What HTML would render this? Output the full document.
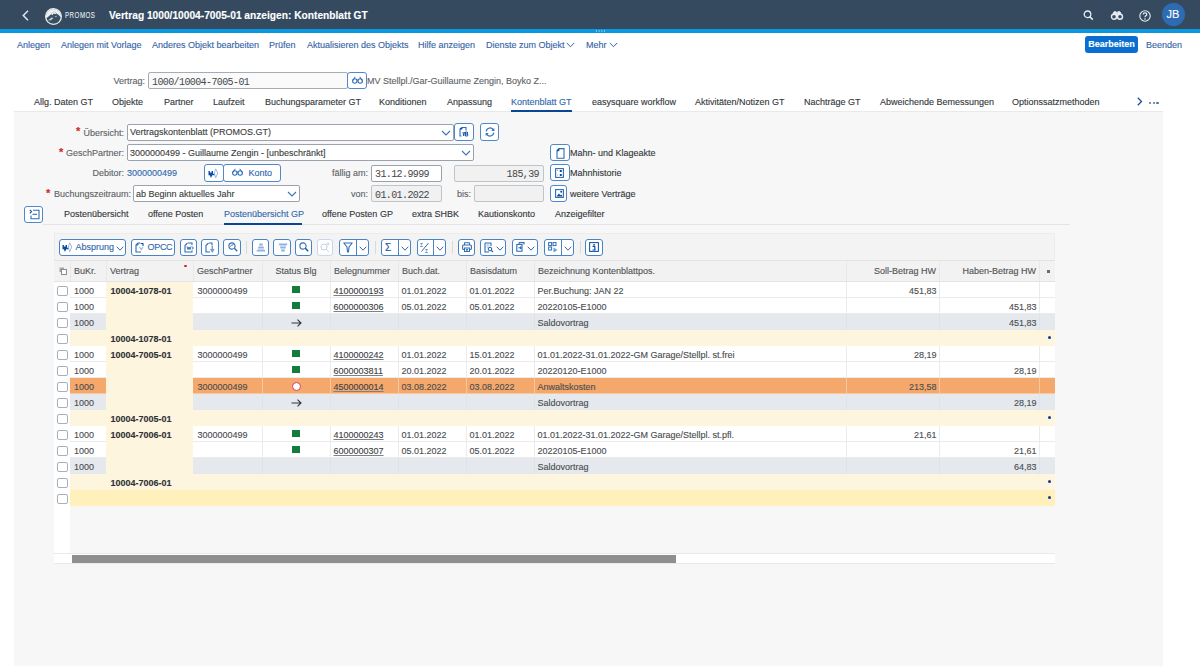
<!DOCTYPE html><html><head><meta charset="utf-8"><style>
*{box-sizing:border-box;margin:0;padding:0}
body{width:1200px;height:672px;overflow:hidden;background:#fff;position:relative;font-family:"Liberation Sans",sans-serif;font-size:9px;color:#32363a;-webkit-text-stroke:0.12px}
.ab{position:absolute;white-space:nowrap}
.t{position:absolute;white-space:nowrap;line-height:11px}
.tb{color:#3463a6;top:40px}
.lbl{color:#5e6266;text-align:right}
.inp{position:absolute;background:#fff;border:1px solid #9aa3ad;border-radius:2px}
.inp.dis{background:#f1f1f1;border-color:#bfc4c9}
.mono{font-family:"Liberation Mono",monospace;-webkit-text-stroke:0;font-size:10px;letter-spacing:-0.6px}
.btn{position:absolute;border:1px solid #5088c9;border-radius:3px;background:#fff}
.tab{top:97px;color:#32363a}
.panel{position:absolute;left:14px;top:111px;width:1149px;height:555px;background:#f7f7f7}
svg{position:absolute;overflow:visible}
</style></head><body>
<div class="ab" style="left:0;top:0;width:1200px;height:29px;background:#354a5f"></div>
<div class="ab" style="left:0;top:29px;width:1200px;height:4px;background:#0899e0"></div>
<div class="ab" style="left:595px;top:30px;width:11px;height:2px;background:radial-gradient(circle,#7fd0f5 0.6px,transparent 0.9px) 0 0/2.75px 2px"></div>
<svg style="left:22px;top:10px" width="8" height="11" viewBox="0 0 8 11"><path d="M6 0.8 L1.3 5.5 L6 10.2" stroke="#dde7f2" stroke-width="1.5" fill="none"/></svg>
<svg style="left:45px;top:7.5px" width="17" height="17" viewBox="0 0 17 17">
<circle cx="8.5" cy="8.5" r="7.6" fill="#eef1f4"/>
<path d="M1.17 10.5 L3.5 8.6 L6 6.3 L9.3 3.6 L11.5 5.6 L13.5 6.8 L16.03 9.5 A7.6 7.6 0 0 1 1.17 10.5Z" fill="#3b4f63"/>
<path d="M6 6.3 L9.3 3.6 L11.5 5.6 L10 6.2 L8.6 5.6 L7.6 7.2 Z" fill="#e9edf1"/>
<path d="M3 12.5 L6.5 9.5 L8.5 10 L6 12.2 Z" fill="#c4ced8"/>
<path d="M9.5 8.5 L12.5 7.5 L11 9.3Z" fill="#aeb9c4"/>
<circle cx="8.5" cy="8.5" r="7.9" fill="none" stroke="#e8ecf0" stroke-width="1.2"/>
</svg>
<div class="t" style="left:65px;top:10.2px;color:#e2e8ee;font-size:9.3px;transform:scaleX(0.66);transform-origin:0 0;letter-spacing:0.8px">PROMOS</div>
<div class="t" style="left:109px;top:10px;color:#fff;font-weight:bold;font-size:10.2px;line-height:12px">Vertrag 1000/10004-7005-01 anzeigen: Kontenblatt GT</div>
<svg style="left:1083px;top:10px" width="11" height="11" viewBox="0 0 11 11"><circle cx="4.5" cy="4.3" r="3.3" stroke="#e6ecf2" stroke-width="1.3" fill="none"/><path d="M6.9 6.7 L9.8 9.6" stroke="#e6ecf2" stroke-width="1.6"/></svg>
<svg style="left:1111px;top:11px" width="12" height="9" viewBox="0 0 12 9"><path d="M1.5 4 L3 0.8 L5.2 0.8 L5.6 4 M10.5 4 L9 0.8 L6.8 0.8 L6.4 4" fill="#e6ecf2" stroke="#e6ecf2" stroke-width="1"/><circle cx="3" cy="5.8" r="2.5" fill="#354a5f" stroke="#e6ecf2" stroke-width="1.4"/><circle cx="9" cy="5.8" r="2.5" fill="#354a5f" stroke="#e6ecf2" stroke-width="1.4"/></svg>
<svg style="left:1139px;top:10px" width="12" height="12" viewBox="0 0 12 12"><circle cx="6" cy="6" r="5.2" stroke="#e6ecf2" stroke-width="1.1" fill="none"/><path d="M4.2 4.6 Q4.2 2.8 6 2.8 Q7.8 2.8 7.8 4.4 Q7.8 5.4 6.6 5.9 Q6 6.2 6 7.3" stroke="#e6ecf2" stroke-width="1.2" fill="none"/><circle cx="6" cy="9" r="0.8" fill="#e6ecf2"/></svg>
<div class="ab" style="left:1161.5px;top:3.2px;width:23px;height:23px;border-radius:50%;background:#2d6cb2;color:#fff;font-size:11px;line-height:23px;text-align:center">JB</div>
<div class="t tb" style="left:17px">Anlegen</div>
<div class="t tb" style="left:61px">Anlegen mit Vorlage</div>
<div class="t tb" style="left:152px">Anderes Objekt bearbeiten</div>
<div class="t tb" style="left:269px">Prüfen</div>
<div class="t tb" style="left:307px">Aktualisieren des Objekts</div>
<div class="t tb" style="left:418px">Hilfe anzeigen</div>
<div class="t tb" style="left:486px">Dienste zum Objekt</div>
<div class="t tb" style="left:586px">Mehr</div>
<svg style="left:566px;top:42px" width="9" height="6" viewBox="0 0 9 6"><path d="M0.8 1 L4.5 4.7 L8.2 1" stroke="#2c62a8" stroke-width="1" fill="none"/></svg>
<svg style="left:609px;top:42px" width="9" height="6" viewBox="0 0 9 6"><path d="M0.8 1 L4.5 4.7 L8.2 1" stroke="#2c62a8" stroke-width="1" fill="none"/></svg>
<div class="ab" style="left:1085px;top:36px;width:53px;height:17px;background:#0a6ed1;border-radius:3px;color:#fff;font-weight:bold;line-height:17px;text-align:center">Bearbeiten</div>
<div class="t tb" style="left:1146px">Beenden</div>
<div class="t lbl" style="right:1055px;top:76px">Vertrag:</div>
<div class="inp" style="left:148px;top:72px;width:200px;height:17px;background:#fafafa;border-color:#a4acb5"></div>
<div class="t mono" style="left:152px;top:76.5px;color:#45484b">1000/10004-7005-01</div>
<div class="btn" style="left:347px;top:72px;width:20px;height:17px"></div>
<svg style="left:352px;top:76px" width="11" height="8" viewBox="0 0 11 8"><circle cx="2.8" cy="5" r="2.2" stroke="#2f6db5" stroke-width="1.1" fill="none"/><circle cx="8.2" cy="5" r="2.2" stroke="#2f6db5" stroke-width="1.1" fill="none"/><path d="M1 4.5 L3.2 0.8 M10 4.5 L7.8 0.8 M5 4.6 Q5.5 3.8 6 4.6" stroke="#2f6db5" stroke-width="1" fill="none"/></svg>
<div class="t" style="left:367px;top:76px;color:#5e6266">MV Stellpl./Gar-Guillaume Zengin, Boyko Z...</div>
<div class="t tab" style="left:34px;color:#32363a">Allg. Daten GT</div>
<div class="t tab" style="left:112px;color:#32363a">Objekte</div>
<div class="t tab" style="left:164px;color:#32363a">Partner</div>
<div class="t tab" style="left:213px;color:#32363a">Laufzeit</div>
<div class="t tab" style="left:265px;color:#32363a">Buchungsparameter GT</div>
<div class="t tab" style="left:379px;color:#32363a">Konditionen</div>
<div class="t tab" style="left:447px;color:#32363a">Anpassung</div>
<div class="t tab" style="left:511px;color:#2f67ad">Kontenblatt GT</div>
<div class="t tab" style="left:592px;color:#32363a">easysquare workflow</div>
<div class="t tab" style="left:695px;color:#32363a">Aktivitäten/Notizen GT</div>
<div class="t tab" style="left:804px;color:#32363a">Nachträge GT</div>
<div class="t tab" style="left:880px;color:#32363a">Abweichende Bemessungen</div>
<div class="t tab" style="left:1012px;color:#32363a">Optionssatzmethoden</div>
<svg style="left:1136.5px;top:96.5px" width="6" height="10" viewBox="0 0 6 10"><path d="M0.8 0.8 L4.5 4.5 L0.8 8.3" stroke="#1c4c9a" stroke-width="1.3" fill="none"/></svg>
<div class="ab" style="left:1149.0px;top:102px;width:2.4px;height:2.4px;border-radius:1.2px;background:#566e98"></div>
<div class="ab" style="left:1152.6px;top:102px;width:2.4px;height:2.4px;border-radius:1.2px;background:#566e98"></div>
<div class="ab" style="left:1156.2px;top:102px;width:2.4px;height:2.4px;border-radius:1.2px;background:#566e98"></div>
<div class="panel"></div>
<div class="ab" style="left:14px;top:111px;width:1149px;height:1px;background:#e9e9e9"></div>
<div class="ab" style="left:511px;top:109.5px;width:61px;height:2.5px;background:#0b4596"></div>
<div class="t" style="left:76px;top:126px;color:#cf2a25;font-size:11px;font-weight:bold">*</div>
<div class="t lbl" style="right:1076px;top:128px">Übersicht:</div>
<div class="inp" style="left:127px;top:124px;width:327px;height:17px"></div>
<div class="t" style="left:130px;top:127px;color:#3a3d40">Vertragskontenblatt (PROMOS.GT)</div>
<div class="t" style="left:59px;top:147px;color:#cf2a25;font-size:11px;font-weight:bold">*</div>
<div class="t lbl" style="right:1076px;top:148px">GeschPartner:</div>
<div class="inp" style="left:127px;top:144px;width:347px;height:17px"></div>
<div class="t" style="left:130px;top:148px;color:#3a3d40">3000000499 - Guillaume Zengin - [unbeschränkt]</div>
<div class="t lbl" style="right:1076px;top:168px">Debitor:</div>
<div class="t" style="left:127px;top:168px;color:#2f67ad">3000000499</div>
<div class="t" style="left:46px;top:188px;color:#cf2a25;font-size:11px;font-weight:bold">*</div>
<div class="t lbl" style="right:1069px;top:189px">Buchungszeitraum:</div>
<div class="inp" style="left:133px;top:185px;width:167px;height:17px"></div>
<div class="t" style="left:136px;top:189px;color:#3a3d40">ab Beginn aktuelles Jahr</div>
<svg style="left:441px;top:130px" width="10" height="6" viewBox="0 0 10 6"><path d="M1 1 L5 5 L9 1" stroke="#3f72b5" stroke-width="1.1" fill="none"/></svg>
<svg style="left:461px;top:150px" width="10" height="6" viewBox="0 0 10 6"><path d="M1 1 L5 5 L9 1" stroke="#3f72b5" stroke-width="1.1" fill="none"/></svg>
<svg style="left:287px;top:191px" width="10" height="6" viewBox="0 0 10 6"><path d="M1 1 L5 5 L9 1" stroke="#3f72b5" stroke-width="1.1" fill="none"/></svg>
<div class="btn" style="left:454px;top:123px;width:20px;height:18px"></div>
<svg style="left:459px;top:127px" width="10" height="10" viewBox="0 0 10 10"><path d="M2.5 9 L1 9 L1 2 L3 0.5 L7 0.5 L7 3.5" stroke="#2f6db5" stroke-width="1.1" fill="none"/><path d="M1 2 L3 2 L3 0.5" fill="#0b4ea2" stroke="#0b4ea2" stroke-width="1"/><path d="M4 5 L4.7 9 L5.5 5 M6.5 5 L6.5 9 L8.5 9 Q9.3 8 8.5 7 L6.5 7 M6.5 5 L8.3 5 Q9 6 8.3 7" stroke="#1d5aa8" stroke-width="1" fill="none"/></svg>
<div class="btn" style="left:480px;top:123px;width:19px;height:18px"></div>
<svg style="left:484.5px;top:127px" width="10" height="10" viewBox="0 0 10 10"><path d="M1.2 4.3 A3.9 3.9 0 0 1 8.6 3.2" stroke="#2f6db5" stroke-width="1.1" fill="none"/><path d="M8.8 5.7 A3.9 3.9 0 0 1 1.4 6.8" stroke="#2f6db5" stroke-width="1.1" fill="none"/><path d="M9.3 1 L9.3 4 L6.3 4Z M0.7 9 L0.7 6 L3.7 6Z" fill="#2f6db5"/></svg>
<div class="btn" style="left:204px;top:164px;width:20px;height:18px"></div>
<svg style="left:208px;top:167.5px" width="11" height="11" viewBox="0 0 11 11"><path d="M0.5 3 L1.9 3 L1.9 4.6 L3.6 4.6 L3.6 3 L5 3 L5 5.8 L6.8 5.8 L6.8 7.2 L4.2 7.2 L3 10 L1.8 7.2 L0.5 7.2Z" fill="#0b4ea2"/><path d="M7.6 0.8 L9.8 5 L7.6 10 L6.4 5Z" stroke="#9bbbe0" stroke-width="1" fill="none"/></svg>
<div class="btn" style="left:223px;top:164px;width:58px;height:18px"></div>
<svg style="left:232px;top:168px" width="11" height="8" viewBox="0 0 11 8"><circle cx="2.8" cy="5" r="2.2" stroke="#2f6db5" stroke-width="1.1" fill="none"/><circle cx="8.2" cy="5" r="2.2" stroke="#2f6db5" stroke-width="1.1" fill="none"/><path d="M1 4.5 L3.2 0.8 M10 4.5 L7.8 0.8 M5 4.6 Q5.5 3.8 6 4.6" stroke="#2f6db5" stroke-width="1" fill="none"/></svg>
<div class="t" style="left:248.5px;top:168px;color:#2f67ad">Konto</div>
<div class="t lbl" style="right:832px;top:168px">fällig am:</div>
<div class="inp" style="left:371px;top:165px;width:71px;height:17px"></div>
<div class="t mono" style="left:375px;top:169px;color:#45484b">31.12.9999</div>
<div class="inp dis" style="left:454px;top:165px;width:90px;height:17px"></div>
<div class="t mono" style="right:661px;top:169px;color:#45484b">185,39</div>
<div class="t lbl" style="right:832px;top:189px">von:</div>
<div class="inp dis" style="left:371px;top:185px;width:71px;height:17px"></div>
<div class="t mono" style="left:375px;top:190px;color:#45484b">01.01.2022</div>
<div class="t lbl" style="right:729px;top:189px">bis:</div>
<div class="inp dis" style="left:474px;top:185px;width:70px;height:17px"></div>
<div class="btn" style="left:550px;top:144px;width:20px;height:17px"></div>
<svg style="left:555.5px;top:147.5px" width="9" height="11" viewBox="0 0 9 11"><path d="M3 0.6 L8 0.6 L8 10.3 L1 10.3 L1 2.8Z" stroke="#2f6db5" stroke-width="1.1" fill="none"/><path d="M1 2.8 L3 2.8 L3 0.6Z" fill="#0b4ea2" stroke="#0b4ea2" stroke-width="0.8"/></svg>
<div class="btn" style="left:550px;top:164px;width:20px;height:17px"></div>
<svg style="left:555px;top:168px" width="9" height="10" viewBox="0 0 9 10"><rect x="0.6" y="0.6" width="7.8" height="8.8" stroke="#2f6db5" stroke-width="1.1" fill="none"/><rect x="4.8" y="2" width="2" height="2" fill="#0b4ea2"/><rect x="4.8" y="6" width="2" height="2" fill="#0b4ea2"/><path d="M2 2.5 L3 2.5 M2 7 L3 7" stroke="#8fb3dc" stroke-width="1"/></svg>
<div class="btn" style="left:550px;top:185px;width:17px;height:17px"></div>
<svg style="left:554.5px;top:189px" width="9" height="9" viewBox="0 0 9 9"><rect x="0.6" y="0.6" width="7.8" height="7.8" stroke="#2f6db5" stroke-width="1.1" fill="none"/><path d="M1.5 7.5 L3.8 4.5 L5.5 6.2 L6.5 5.5 L7.5 7.5Z" fill="#0b4ea2"/><circle cx="6.2" cy="2.7" r="1" fill="#0b4ea2"/></svg>
<div class="t" style="left:570px;top:148px;color:#32363a">Mahn- und Klageakte</div>
<div class="t" style="left:570px;top:168px;color:#32363a">Mahnhistorie</div>
<div class="t" style="left:570px;top:189px;color:#32363a">weitere Verträge</div>
<div class="btn" style="left:24px;top:206px;width:19px;height:17px"></div>
<svg style="left:28.5px;top:209px" width="11" height="11" viewBox="0 0 11 11"><path d="M0.8 0.8 L2.6 2.6 L0.8 4.4" stroke="#1f4f8f" stroke-width="1.1" fill="none"/><path d="M4 1.3 L10 1.3 L10 9.8 L2 9.8 L2 6.5" stroke="#2f6db5" stroke-width="1.1" fill="none"/><path d="M3.5 5.3 L8 5.3" stroke="#2f6db5" stroke-width="1.1"/></svg>
<div class="ab" style="left:43px;top:224px;width:1027px;height:1px;background:#e4e4e4"></div>
<div class="t" style="left:64px;top:209px;color:#32363a">Postenübersicht</div>
<div class="t" style="left:148px;top:209px;color:#32363a">offene Posten</div>
<div class="t" style="left:224px;top:209px;color:#2f67ad">Postenübersicht GP</div>
<div class="t" style="left:322px;top:209px;color:#32363a">offene Posten GP</div>
<div class="t" style="left:412px;top:209px;color:#32363a">extra SHBK</div>
<div class="t" style="left:478px;top:209px;color:#32363a">Kautionskonto</div>
<div class="t" style="left:555px;top:209px;color:#32363a">Anzeigefilter</div>
<div class="ab" style="left:224px;top:222.5px;width:78px;height:2.5px;background:#0b4596"></div>
<div class="ab" style="left:54px;top:233px;width:1001px;height:331px;background:#f3f3f3;border:1px solid #ececec"></div>
<div class="btn" style="left:59px;top:239px;width:67px;height:17px;border-color:#4a82c4"></div>
<div class="btn" style="left:131px;top:239px;width:44px;height:17px;border-color:#4a82c4"></div>
<div class="btn" style="left:180px;top:239px;width:17px;height:17px;border-color:#4a82c4"></div>
<div class="btn" style="left:201px;top:239px;width:18px;height:17px;border-color:#4a82c4"></div>
<div class="btn" style="left:223px;top:239px;width:18px;height:17px;border-color:#4a82c4"></div>
<div class="btn" style="left:252px;top:239px;width:17px;height:17px;border-color:#4a82c4"></div>
<div class="btn" style="left:273px;top:239px;width:18px;height:17px;border-color:#4a82c4"></div>
<div class="btn" style="left:295px;top:239px;width:17px;height:17px;border-color:#4a82c4"></div>
<div class="btn" style="left:317px;top:239px;width:16px;height:17px;border-color:#c9d7e8"></div>
<div class="btn" style="left:339px;top:239px;width:30px;height:17px;border-color:#4a82c4"></div>
<div class="ab" style="left:355.5px;top:240px;width:1px;height:15px;background:#4a82c4"></div>
<div class="btn" style="left:381px;top:239px;width:30px;height:17px;border-color:#4a82c4"></div>
<div class="ab" style="left:397.5px;top:240px;width:1px;height:15px;background:#4a82c4"></div>
<div class="btn" style="left:417px;top:239px;width:29px;height:17px;border-color:#4a82c4"></div>
<div class="ab" style="left:432.5px;top:240px;width:1px;height:15px;background:#4a82c4"></div>
<div class="btn" style="left:458px;top:239px;width:17px;height:17px;border-color:#4a82c4"></div>
<div class="btn" style="left:480px;top:239px;width:26px;height:17px;border-color:#4a82c4"></div>
<div class="btn" style="left:512px;top:239px;width:26px;height:17px;border-color:#4a82c4"></div>
<div class="btn" style="left:544px;top:239px;width:30px;height:17px;border-color:#4a82c4"></div>
<div class="ab" style="left:560.5px;top:240px;width:1px;height:15px;background:#4a82c4"></div>
<div class="btn" style="left:585px;top:239px;width:18px;height:17px;border-color:#4a82c4"></div>
<div class="ab" style="left:246px;top:241px;width:1px;height:13px;background:#dadada"></div>
<div class="ab" style="left:375px;top:241px;width:1px;height:13px;background:#dadada"></div>
<div class="ab" style="left:452px;top:241px;width:1px;height:13px;background:#dadada"></div>
<div class="ab" style="left:580px;top:241px;width:1px;height:13px;background:#dadada"></div>
<svg style="left:62px;top:242px" width="11" height="11" viewBox="0 0 11 11"><path d="M0.5 3 L1.9 3 L1.9 4.6 L3.6 4.6 L3.6 3 L5 3 L5 5.8 L6.8 5.8 L6.8 7.2 L4.2 7.2 L3 10 L1.8 7.2 L0.5 7.2Z" fill="#0b4ea2"/><path d="M7.6 0.8 L9.8 5 L7.6 10 L6.4 5Z" stroke="#9bbbe0" stroke-width="1" fill="none"/></svg>
<div class="t" style="left:75.5px;top:242px;color:#2f67ad">Absprung</div>
<svg style="left:116px;top:246px" width="8" height="5" viewBox="0 0 8 5"><path d="M0.7 0.7 L4 4.2 L7.3 0.7" stroke="#2f67ad" stroke-width="1" fill="none"/></svg>
<svg style="left:134.5px;top:242px" width="9" height="11" viewBox="0 0 9 11"><path d="M5 1 L3 1 L1 3 L1 10 L6 10" stroke="#2f6db5" stroke-width="1.1" fill="none"/><path d="M1 3 L3 3 L3 1" stroke="#2f6db5" stroke-width="1" fill="none"/><path d="M5.5 1.5 L8 1.5 L8 4" stroke="#0b4ea2" stroke-width="1.1" fill="none"/><path d="M4.5 5 L6.3 7.5 L8 5" stroke="#8fb3dc" stroke-width="1.1" fill="none"/></svg>
<div class="t" style="left:147.5px;top:242px;color:#2f67ad;letter-spacing:-0.3px">OPCC</div>
<svg style="left:183.5px;top:242px" width="10" height="11" viewBox="0 0 10 11"><path d="M4 1 L8 1 L8 3 M8 8.5 L8 10 L1 10 L1 3.5 L3.5 1" stroke="#2f6db5" stroke-width="1.1" fill="none"/><path d="M3 4.5 L4 7.5 L5 5 L6 7.5 L7 4.5 M7.8 4.5 L9.5 6 L7.8 7.5" stroke="#1d5aa8" stroke-width="0.9" fill="none"/></svg>
<svg style="left:205px;top:242px" width="10" height="11" viewBox="0 0 10 11"><path d="M4 1 L7 1 L7 3.5 M5 10 L1 10 L1 3.5 L3.5 1" stroke="#2f6db5" stroke-width="1.1" fill="none"/><path d="M7.3 4 L7.3 8.5 M5.5 7 L7.3 9.8 L9 7" stroke="#6d9ad0" stroke-width="1.3" fill="none"/></svg>
<svg style="left:227.5px;top:242px" width="10" height="10" viewBox="0 0 10 10"><circle cx="4" cy="4" r="3.1" stroke="#2f6db5" stroke-width="1.1" fill="none"/><path d="M6.3 6.3 L9.2 9.2" stroke="#2f6db5" stroke-width="1.4"/><path d="M2.2 4.6 L3.5 3.3 L5.5 2.5" stroke="#1d5aa8" stroke-width="0.9" fill="none"/></svg>
<svg style="left:256px;top:243px" width="10" height="9" viewBox="0 0 10 9"><path d="M3.5 0.5 L6.5 0.5 L7 2.5 L3 2.5Z M2.5 3.5 L7.5 3.5 L8 5.5 L2 5.5Z M1.5 6.5 L8.5 6.5 L9.5 8.5 L0.5 8.5Z" fill="#8db2dc"/></svg>
<svg style="left:277.5px;top:243px" width="10" height="9" viewBox="0 0 10 9"><path d="M0.5 0.5 L9.5 0.5 L8.5 2.5 L1.5 2.5Z M2 3.5 L8 3.5 L7.5 5.5 L2.5 5.5Z M3 6.5 L7 6.5 L6.5 8.5 L3.5 8.5Z" fill="#8db2dc"/></svg>
<svg style="left:299px;top:242px" width="10" height="10" viewBox="0 0 10 10"><circle cx="4" cy="4" r="3.1" stroke="#2f6db5" stroke-width="1.1" fill="none"/><path d="M6.3 6.3 L9.2 9.2" stroke="#0b4ea2" stroke-width="1.4"/></svg>
<svg style="left:320px;top:242px" width="10" height="10" viewBox="0 0 10 10"><circle cx="4" cy="5" r="3" stroke="#c3d2e4" stroke-width="1" fill="none"/><path d="M6.2 7.2 L8.8 9.8 M8 0.5 L8 3.5 M6.5 2 L9.5 2" stroke="#c3d2e4" stroke-width="1"/></svg>
<svg style="left:342.5px;top:242px" width="10" height="11" viewBox="0 0 10 11"><path d="M0.8 1 L9.2 1 L6 5 L5.5 10 L4.5 10 L4 5Z" stroke="#2f6db5" stroke-width="1.1" fill="none" stroke-linejoin="round"/></svg>
<svg style="left:358.5px;top:246px" width="8" height="5" viewBox="0 0 8 5"><path d="M0.7 0.7 L4 4.2 L7.3 0.7" stroke="#2f67ad" stroke-width="1" fill="none"/></svg>
<div class="t" style="left:385px;top:242px;color:#1d5aa8;font-size:10px">Σ</div>
<svg style="left:400.5px;top:246px" width="8" height="5" viewBox="0 0 8 5"><path d="M0.7 0.7 L4 4.2 L7.3 0.7" stroke="#2f67ad" stroke-width="1" fill="none"/></svg>
<svg style="left:420px;top:241.5px" width="10" height="11" viewBox="0 0 10 11"><path d="M8.5 1 L1.5 9.5" stroke="#2f6db5" stroke-width="1"/><text x="0" y="5" font-size="5" fill="#1d5aa8" font-family="Liberation Sans">Σ</text><text x="5" y="10.5" font-size="5" fill="#1d5aa8" font-family="Liberation Sans">Σ</text></svg>
<svg style="left:435.5px;top:246px" width="8" height="5" viewBox="0 0 8 5"><path d="M0.7 0.7 L4 4.2 L7.3 0.7" stroke="#2f67ad" stroke-width="1" fill="none"/></svg>
<svg style="left:461.5px;top:242px" width="10" height="10" viewBox="0 0 10 10"><path d="M2.5 3 L2.5 0.7 L7.5 0.7 L7.5 3" stroke="#2f6db5" stroke-width="1" fill="none"/><rect x="0.6" y="3" width="8.8" height="4.5" rx="1" stroke="#2f6db5" stroke-width="1.1" fill="none"/><rect x="2.5" y="6" width="5" height="3.5" fill="#fff" stroke="#2f6db5" stroke-width="1"/><rect x="4" y="7.2" width="2" height="1.3" fill="#0b4ea2"/></svg>
<svg style="left:484px;top:242px" width="10" height="11" viewBox="0 0 10 11"><path d="M1 1 L7 1 L7 4 M5 10 L1 10 L1 1" stroke="#2f6db5" stroke-width="1.1" fill="none"/><path d="M2.5 3 L5.5 3 M2.5 5 L4.5 5" stroke="#8db2dc" stroke-width="1"/><circle cx="6" cy="7" r="1.8" stroke="#1d5aa8" stroke-width="1" fill="none"/><path d="M7.3 8.3 L9 10" stroke="#1d5aa8" stroke-width="1.1"/></svg>
<svg style="left:495.5px;top:246px" width="8" height="5" viewBox="0 0 8 5"><path d="M0.7 0.7 L4 4.2 L7.3 0.7" stroke="#2f67ad" stroke-width="1" fill="none"/></svg>
<svg style="left:515.5px;top:242px" width="11" height="10" viewBox="0 0 11 10"><path d="M3 0.6 L8 0.6 L8 2.5 M3 0.6 L3 2.5 M0.8 2.5 L6 2.5 L6 9.2 L0.8 9.2Z" stroke="#2f6db5" stroke-width="1.1" fill="none"/><path d="M2.5 5.8 L5 5.8 M4 4.5 L5.5 5.8 L4 7" stroke="#1d5aa8" stroke-width="1" fill="none"/></svg>
<svg style="left:527px;top:246px" width="8" height="5" viewBox="0 0 8 5"><path d="M0.7 0.7 L4 4.2 L7.3 0.7" stroke="#2f67ad" stroke-width="1" fill="none"/></svg>
<svg style="left:548px;top:242px" width="10" height="11" viewBox="0 0 10 11"><rect x="0.6" y="0.6" width="3" height="3" stroke="#2f6db5" stroke-width="1" fill="none"/><rect x="5" y="0.6" width="3" height="3" stroke="#2f6db5" stroke-width="1" fill="none"/><rect x="0.6" y="5" width="3" height="3" stroke="#2f6db5" stroke-width="1" fill="none"/><path d="M5.5 5.5 L9.5 8 L5.5 10.5Z" fill="#6d9ad0"/></svg>
<svg style="left:563.5px;top:246px" width="8" height="5" viewBox="0 0 8 5"><path d="M0.7 0.7 L4 4.2 L7.3 0.7" stroke="#2f67ad" stroke-width="1" fill="none"/></svg>
<svg style="left:589px;top:242px" width="10" height="10" viewBox="0 0 10 10"><rect x="0.6" y="0.6" width="8.8" height="8.8" stroke="#1d5aa8" stroke-width="1.1" fill="none"/><rect x="4.3" y="2" width="1.5" height="1.4" fill="#0b4ea2"/><path d="M3.5 4.3 L5.8 4.3 L5.8 8 M3.5 8 L6.7 8" stroke="#0b4ea2" stroke-width="1.2" fill="none"/></svg>
<div class="ab" style="left:54px;top:260px;width:1001px;height:22px;background:#f2f2f2;border-top:1px solid #e3e3e3;border-bottom:1px solid #e3e3e3"></div>
<svg style="left:58.5px;top:266.5px" width="8" height="8" viewBox="0 0 8 8"><path d="M0.5 0.5 L5 0.5 L5 2 L2 2 L2 5 L0.5 5Z" fill="#a3a6a9"/><rect x="2.5" y="2.5" width="5" height="5" stroke="#8a8d90" stroke-width="1" fill="#fff"/></svg>
<div class="ab" style="left:70px;top:261px;width:1px;height:20px;background:#e8e8e8"></div>
<div class="t" style="left:74px;top:266px;color:#505356">BuKr.</div>
<div class="ab" style="left:106px;top:261px;width:1px;height:20px;background:#e8e8e8"></div>
<div class="t" style="left:110px;top:266px;color:#505356">Vertrag</div>
<div class="ab" style="left:193px;top:261px;width:1px;height:20px;background:#e8e8e8"></div>
<div class="t" style="left:197px;top:266px;color:#505356">GeschPartner</div>
<div class="ab" style="left:262px;top:261px;width:1px;height:20px;background:#e8e8e8"></div>
<div class="t" style="left:262px;width:68px;text-align:center;top:266px;color:#505356">Status Blg</div>
<div class="ab" style="left:330px;top:261px;width:1px;height:20px;background:#e8e8e8"></div>
<div class="t" style="left:334px;top:266px;color:#505356">Belegnummer</div>
<div class="ab" style="left:398px;top:261px;width:1px;height:20px;background:#e8e8e8"></div>
<div class="t" style="left:402px;top:266px;color:#505356">Buch.dat.</div>
<div class="ab" style="left:466px;top:261px;width:1px;height:20px;background:#e8e8e8"></div>
<div class="t" style="left:470px;top:266px;color:#505356">Basisdatum</div>
<div class="ab" style="left:534px;top:261px;width:1px;height:20px;background:#e8e8e8"></div>
<div class="t" style="left:538px;top:266px;color:#505356">Bezeichnung Kontenblattpos.</div>
<div class="ab" style="left:846px;top:261px;width:1px;height:20px;background:#e8e8e8"></div>
<div class="t" style="left:846px;width:90px;text-align:right;top:266px;color:#505356">Soll-Betrag HW</div>
<div class="ab" style="left:939px;top:261px;width:1px;height:20px;background:#e8e8e8"></div>
<div class="t" style="left:939px;width:97px;text-align:right;top:266px;color:#505356">Haben-Betrag HW</div>
<div class="ab" style="left:1039px;top:261px;width:1px;height:20px;background:#e8e8e8"></div>
<div class="ab" style="left:184px;top:265px;width:3px;height:2px;background:#d0281f;border-radius:1px"></div>
<div class="ab" style="left:1046.5px;top:269.5px;width:3px;height:3px;background:#6b6b6b"></div>
<div class="ab" style="left:54px;top:282px;width:16px;height:16px;background:#fff"></div>
<div class="ab" style="left:57px;top:285.5px;width:11px;height:10px;border:1px solid #a7b0b9;border-radius:2px;background:#fff"></div>
<div class="ab" style="left:70px;top:282px;width:36px;height:16px;background:#ffffff"></div>
<div class="ab" style="left:106px;top:282px;width:87px;height:16px;background:#fdf5de"></div>
<div class="ab" style="left:193px;top:282px;width:862px;height:16px;background:#ffffff"></div>
<div class="ab" style="left:262px;top:282px;width:1px;height:16px;background:#ebebeb"></div>
<div class="ab" style="left:330px;top:282px;width:1px;height:16px;background:#ebebeb"></div>
<div class="ab" style="left:398px;top:282px;width:1px;height:16px;background:#ebebeb"></div>
<div class="ab" style="left:466px;top:282px;width:1px;height:16px;background:#ebebeb"></div>
<div class="ab" style="left:534px;top:282px;width:1px;height:16px;background:#ebebeb"></div>
<div class="ab" style="left:846px;top:282px;width:1px;height:16px;background:#ebebeb"></div>
<div class="ab" style="left:939px;top:282px;width:1px;height:16px;background:#ebebeb"></div>
<div class="ab" style="left:1039px;top:282px;width:1px;height:16px;background:#ebebeb"></div>
<div class="ab" style="left:193px;top:297px;width:862px;height:1px;background:#ebebeb"></div>
<div class="ab" style="left:70px;top:297px;width:36px;height:1px;background:#ebebeb"></div>
<div class="t" style="left:74px;top:285.5px;color:#4a4d50">1000</div>
<div class="t" style="left:110.5px;top:285.5px;font-weight:bold;color:#2e3134">10004-1078-01</div>
<div class="t" style="left:197.5px;top:285.5px;color:#4a4d50">3000000499</div>
<div class="ab" style="left:292.2px;top:286.3px;width:8px;height:7.2px;background:#137c3c"></div>
<div class="t" style="left:333.5px;top:285.5px;color:#3f4245;text-decoration:underline;text-decoration-color:#7d8085">4100000193</div>
<div class="t" style="left:401.5px;top:285.5px;color:#4a4d50">01.01.2022</div>
<div class="t" style="left:469.5px;top:285.5px;color:#4a4d50">01.01.2022</div>
<div class="t" style="left:537.5px;top:285.5px;color:#4a4d50">Per.Buchung: JAN 22</div>
<div class="t" style="right:263.5px;top:285.5px;color:#4a4d50">451,83</div>
<div class="ab" style="left:54px;top:298px;width:16px;height:16px;background:#fff"></div>
<div class="ab" style="left:57px;top:301.5px;width:11px;height:10px;border:1px solid #a7b0b9;border-radius:2px;background:#fff"></div>
<div class="ab" style="left:70px;top:298px;width:36px;height:16px;background:#ffffff"></div>
<div class="ab" style="left:106px;top:298px;width:87px;height:16px;background:#fdf5de"></div>
<div class="ab" style="left:193px;top:298px;width:862px;height:16px;background:#ffffff"></div>
<div class="ab" style="left:262px;top:298px;width:1px;height:16px;background:#ebebeb"></div>
<div class="ab" style="left:330px;top:298px;width:1px;height:16px;background:#ebebeb"></div>
<div class="ab" style="left:398px;top:298px;width:1px;height:16px;background:#ebebeb"></div>
<div class="ab" style="left:466px;top:298px;width:1px;height:16px;background:#ebebeb"></div>
<div class="ab" style="left:534px;top:298px;width:1px;height:16px;background:#ebebeb"></div>
<div class="ab" style="left:846px;top:298px;width:1px;height:16px;background:#ebebeb"></div>
<div class="ab" style="left:939px;top:298px;width:1px;height:16px;background:#ebebeb"></div>
<div class="ab" style="left:1039px;top:298px;width:1px;height:16px;background:#ebebeb"></div>
<div class="ab" style="left:193px;top:313px;width:862px;height:1px;background:#ebebeb"></div>
<div class="ab" style="left:70px;top:313px;width:36px;height:1px;background:#ebebeb"></div>
<div class="t" style="left:74px;top:301.5px;color:#4a4d50">1000</div>
<div class="ab" style="left:292.2px;top:302.3px;width:8px;height:7.2px;background:#137c3c"></div>
<div class="t" style="left:333.5px;top:301.5px;color:#3f4245;text-decoration:underline;text-decoration-color:#7d8085">6000000306</div>
<div class="t" style="left:401.5px;top:301.5px;color:#4a4d50">05.01.2022</div>
<div class="t" style="left:469.5px;top:301.5px;color:#4a4d50">05.01.2022</div>
<div class="t" style="left:537.5px;top:301.5px;color:#4a4d50">20220105-E1000</div>
<div class="t" style="right:163.5px;top:301.5px;color:#4a4d50">451,83</div>
<div class="ab" style="left:54px;top:314px;width:16px;height:16px;background:#fff"></div>
<div class="ab" style="left:57px;top:317.5px;width:11px;height:10px;border:1px solid #a7b0b9;border-radius:2px;background:#fff"></div>
<div class="ab" style="left:70px;top:314px;width:36px;height:16px;background:#e5e9ee"></div>
<div class="ab" style="left:106px;top:314px;width:87px;height:16px;background:#fdf5de"></div>
<div class="ab" style="left:193px;top:314px;width:862px;height:16px;background:#e5e9ee"></div>
<div class="ab" style="left:262px;top:314px;width:1px;height:16px;background:#dfe3e8"></div>
<div class="ab" style="left:330px;top:314px;width:1px;height:16px;background:#dfe3e8"></div>
<div class="ab" style="left:398px;top:314px;width:1px;height:16px;background:#dfe3e8"></div>
<div class="ab" style="left:466px;top:314px;width:1px;height:16px;background:#dfe3e8"></div>
<div class="ab" style="left:534px;top:314px;width:1px;height:16px;background:#dfe3e8"></div>
<div class="ab" style="left:846px;top:314px;width:1px;height:16px;background:#dfe3e8"></div>
<div class="ab" style="left:939px;top:314px;width:1px;height:16px;background:#dfe3e8"></div>
<div class="ab" style="left:1039px;top:314px;width:1px;height:16px;background:#dfe3e8"></div>
<div class="t" style="left:74px;top:317.5px;color:#4a4d50">1000</div>
<svg style="left:291px;top:318.5px" width="11" height="8" viewBox="0 0 11 8"><path d="M0.5 4 H10 M6.5 0.7 L10 4 L6.5 7.3" stroke="#32363a" stroke-width="1.1" fill="none"/></svg>
<div class="t" style="left:537.5px;top:317.5px;color:#4a4d50">Saldovortrag</div>
<div class="t" style="right:163.5px;top:317.5px;color:#4a4d50">451,83</div>
<div class="ab" style="left:54px;top:330px;width:16px;height:16px;background:#fff"></div>
<div class="ab" style="left:57px;top:333.5px;width:11px;height:10px;border:1px solid #a7b0b9;border-radius:2px;background:#fff"></div>
<div class="ab" style="left:70px;top:330px;width:985px;height:16px;background:#fdf5de"></div>
<div class="ab" style="left:70px;top:345.5px;width:985px;height:0.5px;background:#f3ead0"></div>
<div class="t" style="left:110.5px;top:333.5px;font-weight:bold;color:#2e3134">10004-1078-01</div>
<div class="ab" style="left:1048px;top:335.8px;width:3px;height:3px;border-radius:1.5px;background:#0b3d8f"></div>
<div class="ab" style="left:54px;top:346px;width:16px;height:16px;background:#fff"></div>
<div class="ab" style="left:57px;top:349.5px;width:11px;height:10px;border:1px solid #a7b0b9;border-radius:2px;background:#fff"></div>
<div class="ab" style="left:70px;top:346px;width:36px;height:16px;background:#ffffff"></div>
<div class="ab" style="left:106px;top:346px;width:87px;height:16px;background:#fdf5de"></div>
<div class="ab" style="left:193px;top:346px;width:862px;height:16px;background:#ffffff"></div>
<div class="ab" style="left:262px;top:346px;width:1px;height:16px;background:#ebebeb"></div>
<div class="ab" style="left:330px;top:346px;width:1px;height:16px;background:#ebebeb"></div>
<div class="ab" style="left:398px;top:346px;width:1px;height:16px;background:#ebebeb"></div>
<div class="ab" style="left:466px;top:346px;width:1px;height:16px;background:#ebebeb"></div>
<div class="ab" style="left:534px;top:346px;width:1px;height:16px;background:#ebebeb"></div>
<div class="ab" style="left:846px;top:346px;width:1px;height:16px;background:#ebebeb"></div>
<div class="ab" style="left:939px;top:346px;width:1px;height:16px;background:#ebebeb"></div>
<div class="ab" style="left:1039px;top:346px;width:1px;height:16px;background:#ebebeb"></div>
<div class="ab" style="left:193px;top:361px;width:862px;height:1px;background:#ebebeb"></div>
<div class="ab" style="left:70px;top:361px;width:36px;height:1px;background:#ebebeb"></div>
<div class="t" style="left:74px;top:349.5px;color:#4a4d50">1000</div>
<div class="t" style="left:110.5px;top:349.5px;font-weight:bold;color:#2e3134">10004-7005-01</div>
<div class="t" style="left:197.5px;top:349.5px;color:#4a4d50">3000000499</div>
<div class="ab" style="left:292.2px;top:350.3px;width:8px;height:7.2px;background:#137c3c"></div>
<div class="t" style="left:333.5px;top:349.5px;color:#3f4245;text-decoration:underline;text-decoration-color:#7d8085">4100000242</div>
<div class="t" style="left:401.5px;top:349.5px;color:#4a4d50">01.01.2022</div>
<div class="t" style="left:469.5px;top:349.5px;color:#4a4d50">15.01.2022</div>
<div class="t" style="left:537.5px;top:349.5px;color:#4a4d50">01.01.2022-31.01.2022-GM Garage/Stellpl. st.frei</div>
<div class="t" style="right:263.5px;top:349.5px;color:#4a4d50">28,19</div>
<div class="ab" style="left:54px;top:362px;width:16px;height:16px;background:#fff"></div>
<div class="ab" style="left:57px;top:365.5px;width:11px;height:10px;border:1px solid #a7b0b9;border-radius:2px;background:#fff"></div>
<div class="ab" style="left:70px;top:362px;width:36px;height:16px;background:#ffffff"></div>
<div class="ab" style="left:106px;top:362px;width:87px;height:16px;background:#fdf5de"></div>
<div class="ab" style="left:193px;top:362px;width:862px;height:16px;background:#ffffff"></div>
<div class="ab" style="left:262px;top:362px;width:1px;height:16px;background:#ebebeb"></div>
<div class="ab" style="left:330px;top:362px;width:1px;height:16px;background:#ebebeb"></div>
<div class="ab" style="left:398px;top:362px;width:1px;height:16px;background:#ebebeb"></div>
<div class="ab" style="left:466px;top:362px;width:1px;height:16px;background:#ebebeb"></div>
<div class="ab" style="left:534px;top:362px;width:1px;height:16px;background:#ebebeb"></div>
<div class="ab" style="left:846px;top:362px;width:1px;height:16px;background:#ebebeb"></div>
<div class="ab" style="left:939px;top:362px;width:1px;height:16px;background:#ebebeb"></div>
<div class="ab" style="left:1039px;top:362px;width:1px;height:16px;background:#ebebeb"></div>
<div class="ab" style="left:193px;top:377px;width:862px;height:1px;background:#ebebeb"></div>
<div class="ab" style="left:70px;top:377px;width:36px;height:1px;background:#ebebeb"></div>
<div class="t" style="left:74px;top:365.5px;color:#4a4d50">1000</div>
<div class="ab" style="left:292.2px;top:366.3px;width:8px;height:7.2px;background:#137c3c"></div>
<div class="t" style="left:333.5px;top:365.5px;color:#3f4245;text-decoration:underline;text-decoration-color:#7d8085">6000003811</div>
<div class="t" style="left:401.5px;top:365.5px;color:#4a4d50">20.01.2022</div>
<div class="t" style="left:469.5px;top:365.5px;color:#4a4d50">20.01.2022</div>
<div class="t" style="left:537.5px;top:365.5px;color:#4a4d50">20220120-E1000</div>
<div class="t" style="right:163.5px;top:365.5px;color:#4a4d50">28,19</div>
<div class="ab" style="left:54px;top:378px;width:16px;height:16px;background:#fff"></div>
<div class="ab" style="left:57px;top:381.5px;width:11px;height:10px;border:1px solid #a7b0b9;border-radius:2px;background:#fff"></div>
<div class="ab" style="left:70px;top:378px;width:36px;height:16px;background:#f5a86b"></div>
<div class="ab" style="left:106px;top:378px;width:87px;height:16px;background:#fdf5de"></div>
<div class="ab" style="left:193px;top:378px;width:862px;height:16px;background:#f5a86b"></div>
<div class="ab" style="left:262px;top:378px;width:1px;height:16px;background:#f8c7a0"></div>
<div class="ab" style="left:330px;top:378px;width:1px;height:16px;background:#f8c7a0"></div>
<div class="ab" style="left:398px;top:378px;width:1px;height:16px;background:#f8c7a0"></div>
<div class="ab" style="left:466px;top:378px;width:1px;height:16px;background:#f8c7a0"></div>
<div class="ab" style="left:534px;top:378px;width:1px;height:16px;background:#f8c7a0"></div>
<div class="ab" style="left:846px;top:378px;width:1px;height:16px;background:#f8c7a0"></div>
<div class="ab" style="left:939px;top:378px;width:1px;height:16px;background:#f8c7a0"></div>
<div class="ab" style="left:1039px;top:378px;width:1px;height:16px;background:#f8c7a0"></div>
<div class="ab" style="left:193px;top:393px;width:862px;height:1px;background:#f8c7a0"></div>
<div class="ab" style="left:70px;top:393px;width:36px;height:1px;background:#f8c7a0"></div>
<div class="t" style="left:74px;top:381.5px;color:#4a4d50">1000</div>
<div class="t" style="left:197.5px;top:381.5px;color:#4a4d50">3000000499</div>
<div class="ab" style="left:291.5px;top:381.5px;width:9px;height:9px;border-radius:50%;background:#fff;border:1px solid #d2405a"></div>
<div class="t" style="left:333.5px;top:381.5px;color:#3f4245;text-decoration:underline;text-decoration-color:#7d8085">4500000014</div>
<div class="t" style="left:401.5px;top:381.5px;color:#4a4d50">03.08.2022</div>
<div class="t" style="left:469.5px;top:381.5px;color:#4a4d50">03.08.2022</div>
<div class="t" style="left:537.5px;top:381.5px;color:#4a4d50">Anwaltskosten</div>
<div class="t" style="right:263.5px;top:381.5px;color:#4a4d50">213,58</div>
<div class="ab" style="left:54px;top:394px;width:16px;height:16px;background:#fff"></div>
<div class="ab" style="left:57px;top:397.5px;width:11px;height:10px;border:1px solid #a7b0b9;border-radius:2px;background:#fff"></div>
<div class="ab" style="left:70px;top:394px;width:36px;height:16px;background:#e5e9ee"></div>
<div class="ab" style="left:106px;top:394px;width:87px;height:16px;background:#fdf5de"></div>
<div class="ab" style="left:193px;top:394px;width:862px;height:16px;background:#e5e9ee"></div>
<div class="ab" style="left:262px;top:394px;width:1px;height:16px;background:#dfe3e8"></div>
<div class="ab" style="left:330px;top:394px;width:1px;height:16px;background:#dfe3e8"></div>
<div class="ab" style="left:398px;top:394px;width:1px;height:16px;background:#dfe3e8"></div>
<div class="ab" style="left:466px;top:394px;width:1px;height:16px;background:#dfe3e8"></div>
<div class="ab" style="left:534px;top:394px;width:1px;height:16px;background:#dfe3e8"></div>
<div class="ab" style="left:846px;top:394px;width:1px;height:16px;background:#dfe3e8"></div>
<div class="ab" style="left:939px;top:394px;width:1px;height:16px;background:#dfe3e8"></div>
<div class="ab" style="left:1039px;top:394px;width:1px;height:16px;background:#dfe3e8"></div>
<div class="t" style="left:74px;top:397.5px;color:#4a4d50">1000</div>
<svg style="left:291px;top:398.5px" width="11" height="8" viewBox="0 0 11 8"><path d="M0.5 4 H10 M6.5 0.7 L10 4 L6.5 7.3" stroke="#32363a" stroke-width="1.1" fill="none"/></svg>
<div class="t" style="left:537.5px;top:397.5px;color:#4a4d50">Saldovortrag</div>
<div class="t" style="right:163.5px;top:397.5px;color:#4a4d50">28,19</div>
<div class="ab" style="left:54px;top:410px;width:16px;height:16px;background:#fff"></div>
<div class="ab" style="left:57px;top:413.5px;width:11px;height:10px;border:1px solid #a7b0b9;border-radius:2px;background:#fff"></div>
<div class="ab" style="left:70px;top:410px;width:985px;height:16px;background:#fdf5de"></div>
<div class="ab" style="left:70px;top:425.5px;width:985px;height:0.5px;background:#f3ead0"></div>
<div class="t" style="left:110.5px;top:413.5px;font-weight:bold;color:#2e3134">10004-7005-01</div>
<div class="ab" style="left:1048px;top:415.8px;width:3px;height:3px;border-radius:1.5px;background:#0b3d8f"></div>
<div class="ab" style="left:54px;top:426px;width:16px;height:16px;background:#fff"></div>
<div class="ab" style="left:57px;top:429.5px;width:11px;height:10px;border:1px solid #a7b0b9;border-radius:2px;background:#fff"></div>
<div class="ab" style="left:70px;top:426px;width:36px;height:16px;background:#ffffff"></div>
<div class="ab" style="left:106px;top:426px;width:87px;height:16px;background:#fdf5de"></div>
<div class="ab" style="left:193px;top:426px;width:862px;height:16px;background:#ffffff"></div>
<div class="ab" style="left:262px;top:426px;width:1px;height:16px;background:#ebebeb"></div>
<div class="ab" style="left:330px;top:426px;width:1px;height:16px;background:#ebebeb"></div>
<div class="ab" style="left:398px;top:426px;width:1px;height:16px;background:#ebebeb"></div>
<div class="ab" style="left:466px;top:426px;width:1px;height:16px;background:#ebebeb"></div>
<div class="ab" style="left:534px;top:426px;width:1px;height:16px;background:#ebebeb"></div>
<div class="ab" style="left:846px;top:426px;width:1px;height:16px;background:#ebebeb"></div>
<div class="ab" style="left:939px;top:426px;width:1px;height:16px;background:#ebebeb"></div>
<div class="ab" style="left:1039px;top:426px;width:1px;height:16px;background:#ebebeb"></div>
<div class="ab" style="left:193px;top:441px;width:862px;height:1px;background:#ebebeb"></div>
<div class="ab" style="left:70px;top:441px;width:36px;height:1px;background:#ebebeb"></div>
<div class="t" style="left:74px;top:429.5px;color:#4a4d50">1000</div>
<div class="t" style="left:110.5px;top:429.5px;font-weight:bold;color:#2e3134">10004-7006-01</div>
<div class="t" style="left:197.5px;top:429.5px;color:#4a4d50">3000000499</div>
<div class="ab" style="left:292.2px;top:430.3px;width:8px;height:7.2px;background:#137c3c"></div>
<div class="t" style="left:333.5px;top:429.5px;color:#3f4245;text-decoration:underline;text-decoration-color:#7d8085">4100000243</div>
<div class="t" style="left:401.5px;top:429.5px;color:#4a4d50">01.01.2022</div>
<div class="t" style="left:469.5px;top:429.5px;color:#4a4d50">01.01.2022</div>
<div class="t" style="left:537.5px;top:429.5px;color:#4a4d50">01.01.2022-31.01.2022-GM Garage/Stellpl. st.pfl.</div>
<div class="t" style="right:263.5px;top:429.5px;color:#4a4d50">21,61</div>
<div class="ab" style="left:54px;top:442px;width:16px;height:16px;background:#fff"></div>
<div class="ab" style="left:57px;top:445.5px;width:11px;height:10px;border:1px solid #a7b0b9;border-radius:2px;background:#fff"></div>
<div class="ab" style="left:70px;top:442px;width:36px;height:16px;background:#ffffff"></div>
<div class="ab" style="left:106px;top:442px;width:87px;height:16px;background:#fdf5de"></div>
<div class="ab" style="left:193px;top:442px;width:862px;height:16px;background:#ffffff"></div>
<div class="ab" style="left:262px;top:442px;width:1px;height:16px;background:#ebebeb"></div>
<div class="ab" style="left:330px;top:442px;width:1px;height:16px;background:#ebebeb"></div>
<div class="ab" style="left:398px;top:442px;width:1px;height:16px;background:#ebebeb"></div>
<div class="ab" style="left:466px;top:442px;width:1px;height:16px;background:#ebebeb"></div>
<div class="ab" style="left:534px;top:442px;width:1px;height:16px;background:#ebebeb"></div>
<div class="ab" style="left:846px;top:442px;width:1px;height:16px;background:#ebebeb"></div>
<div class="ab" style="left:939px;top:442px;width:1px;height:16px;background:#ebebeb"></div>
<div class="ab" style="left:1039px;top:442px;width:1px;height:16px;background:#ebebeb"></div>
<div class="ab" style="left:193px;top:457px;width:862px;height:1px;background:#ebebeb"></div>
<div class="ab" style="left:70px;top:457px;width:36px;height:1px;background:#ebebeb"></div>
<div class="t" style="left:74px;top:445.5px;color:#4a4d50">1000</div>
<div class="ab" style="left:292.2px;top:446.3px;width:8px;height:7.2px;background:#137c3c"></div>
<div class="t" style="left:333.5px;top:445.5px;color:#3f4245;text-decoration:underline;text-decoration-color:#7d8085">6000000307</div>
<div class="t" style="left:401.5px;top:445.5px;color:#4a4d50">05.01.2022</div>
<div class="t" style="left:469.5px;top:445.5px;color:#4a4d50">05.01.2022</div>
<div class="t" style="left:537.5px;top:445.5px;color:#4a4d50">20220105-E1000</div>
<div class="t" style="right:163.5px;top:445.5px;color:#4a4d50">21,61</div>
<div class="ab" style="left:54px;top:458px;width:16px;height:16px;background:#fff"></div>
<div class="ab" style="left:57px;top:461.5px;width:11px;height:10px;border:1px solid #a7b0b9;border-radius:2px;background:#fff"></div>
<div class="ab" style="left:70px;top:458px;width:36px;height:16px;background:#e5e9ee"></div>
<div class="ab" style="left:106px;top:458px;width:87px;height:16px;background:#fdf5de"></div>
<div class="ab" style="left:193px;top:458px;width:862px;height:16px;background:#e5e9ee"></div>
<div class="ab" style="left:262px;top:458px;width:1px;height:16px;background:#dfe3e8"></div>
<div class="ab" style="left:330px;top:458px;width:1px;height:16px;background:#dfe3e8"></div>
<div class="ab" style="left:398px;top:458px;width:1px;height:16px;background:#dfe3e8"></div>
<div class="ab" style="left:466px;top:458px;width:1px;height:16px;background:#dfe3e8"></div>
<div class="ab" style="left:534px;top:458px;width:1px;height:16px;background:#dfe3e8"></div>
<div class="ab" style="left:846px;top:458px;width:1px;height:16px;background:#dfe3e8"></div>
<div class="ab" style="left:939px;top:458px;width:1px;height:16px;background:#dfe3e8"></div>
<div class="ab" style="left:1039px;top:458px;width:1px;height:16px;background:#dfe3e8"></div>
<div class="t" style="left:74px;top:461.5px;color:#4a4d50">1000</div>
<div class="t" style="left:537.5px;top:461.5px;color:#4a4d50">Saldovortrag</div>
<div class="t" style="right:163.5px;top:461.5px;color:#4a4d50">64,83</div>
<div class="ab" style="left:54px;top:474px;width:16px;height:16px;background:#fff"></div>
<div class="ab" style="left:57px;top:477.5px;width:11px;height:10px;border:1px solid #a7b0b9;border-radius:2px;background:#fff"></div>
<div class="ab" style="left:70px;top:474px;width:985px;height:16px;background:#fdf5de"></div>
<div class="ab" style="left:70px;top:489.5px;width:985px;height:0.5px;background:#f3ead0"></div>
<div class="t" style="left:110.5px;top:477.5px;font-weight:bold;color:#2e3134">10004-7006-01</div>
<div class="ab" style="left:1048px;top:479.8px;width:3px;height:3px;border-radius:1.5px;background:#0b3d8f"></div>
<div class="ab" style="left:54px;top:490px;width:16px;height:16px;background:#fff"></div>
<div class="ab" style="left:57px;top:493.5px;width:11px;height:10px;border:1px solid #a7b0b9;border-radius:2px;background:#fff"></div>
<div class="ab" style="left:70px;top:490px;width:985px;height:16px;background:#fff0bc"></div>
<div class="ab" style="left:70px;top:505.5px;width:985px;height:0.5px;background:#f3ead0"></div>
<div class="ab" style="left:1048px;top:495.8px;width:3px;height:3px;border-radius:1.5px;background:#0b3d8f"></div>
<div class="ab" style="left:54px;top:505.5px;width:16px;height:47px;background:#fff"></div>
<div class="ab" style="left:70px;top:505.5px;width:985px;height:47px;background:#f7f7f7"></div>
<div class="ab" style="left:54px;top:552.5px;width:1001px;height:11.5px;background:#fff;border-top:1px solid #e9e9e9;border-bottom:1px solid #e9e9e9"></div>
<div class="ab" style="left:72px;top:555px;width:604px;height:7.5px;background:#8f8f8f"></div>
</body></html>
